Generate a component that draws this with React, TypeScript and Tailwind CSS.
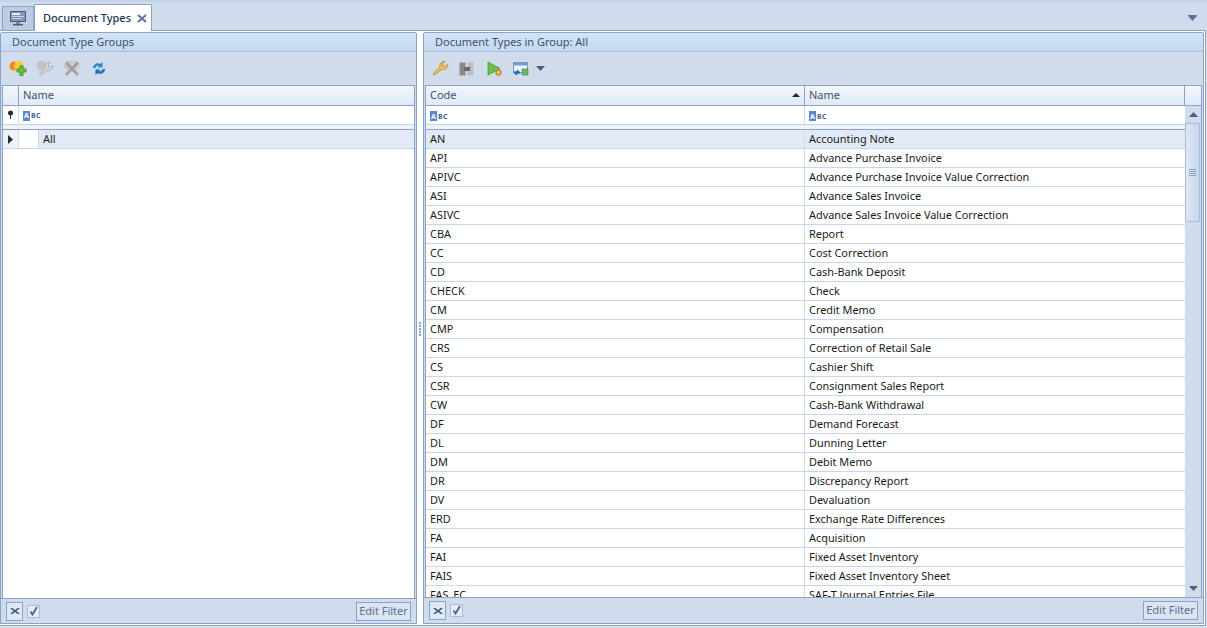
import React from "react";

const rows: [string, string][] = [
  ["AN", "Accounting Note"],
  ["API", "Advance Purchase Invoice"],
  ["APIVC", "Advance Purchase Invoice Value Correction"],
  ["ASI", "Advance Sales Invoice"],
  ["ASIVC", "Advance Sales Invoice Value Correction"],
  ["CBA", "Report"],
  ["CC", "Cost Correction"],
  ["CD", "Cash-Bank Deposit"],
  ["CHECK", "Check"],
  ["CM", "Credit Memo"],
  ["CMP", "Compensation"],
  ["CRS", "Correction of Retail Sale"],
  ["CS", "Cashier Shift"],
  ["CSR", "Consignment Sales Report"],
  ["CW", "Cash-Bank Withdrawal"],
  ["DF", "Demand Forecast"],
  ["DL", "Dunning Letter"],
  ["DM", "Debit Memo"],
  ["DR", "Discrepancy Report"],
  ["DV", "Devaluation"],
  ["ERD", "Exchange Rate Differences"],
  ["FA", "Acquisition"],
  ["FAI", "Fixed Asset Inventory"],
  ["FAIS", "Fixed Asset Inventory Sheet"],
  ["FAS_EC", "SAF-T Journal Entries File"],
];

function Abc() {
  return (
    <span className="flex items-center gap-[1px]">
      <span className="flex h-[10px] w-[7px] items-center justify-center bg-[#5b87d0] text-[7px] font-bold leading-none text-white">A</span>
      <span className="text-[7px] font-bold leading-none tracking-[0.3px] text-[#3f5f90]">BC</span>
    </span>
  );
}

function Footer({ tall, pad }: { tall?: boolean; pad: string }) {
  return (
    <div className={`flex shrink-0 items-center border-t border-[#8aa3c6] bg-[#d0dcec] pr-[5px] ${pad} ${tall ? "h-[26px]" : "h-[25px]"}`}>
      <div className="flex h-[19px] w-[17px] items-center justify-center border border-[#8aa3c6] bg-[#dfe9f6]">
        <svg width="10" height="6" viewBox="0 0 10 6"><path d="M0 0h2.500L5 2l2.500-2H10L6.500 3 10 6H7.500L5 4 2.500 6H0l3.500-3z" fill="#4d5f7d" /></svg>
      </div>
      <div className="ml-[4px] flex h-[13px] w-[13px] items-center justify-center border border-[#a9bdd8] bg-[#e6ebf3]">
        <svg width="11" height="11" viewBox="0 0 11 11"><path d="M2.500 5.500l2 3L9 1" fill="none" stroke="#4d6690" strokeWidth="1.800" /></svg>
      </div>
      <div className="ml-auto flex h-[19px] w-[55px] items-center justify-center border border-[#8aa3c6] bg-[#dae5f3] text-[11px] text-[#5f6f8c]">Edit Filter</div>
    </div>
  );
}

function Panel({ title, toolbar, children, className, tall, pad }: { title: string; toolbar: React.ReactNode; children: React.ReactNode; className: string; tall?: boolean; pad: string }) {
  return (
    <section className={`flex h-[592px] shrink-0 flex-col rounded-t-[2px] border border-[#8aa3c6] bg-[#d0dcec] ${className}`}>
      <div className="flex h-[19px] shrink-0 items-center border-b border-[#a9bdd8] bg-gradient-to-b from-[#d3e4f9] to-[#c5d8f1] pl-[11px] text-[11px] text-[#3f4f6e]">{title}</div>
      <div className="flex h-[33px] shrink-0 items-center">{toolbar}</div>
      {children}
      <Footer tall={tall} pad={pad} />
    </section>
  );
}

const hdr = "flex h-[21px] shrink-0 items-center border-t border-b border-[#8aa3c6] bg-gradient-to-b from-[#f3f7fd] to-[#dfe9f7] text-[11px] text-[#3f4f6e]";
const sep = "h-[6px] shrink-0 border-t border-b border-t-[#c3d8f0] border-b-[#8aa3c6] bg-[#eef3fa]";
const font = { fontFamily: '"Noto Sans", "Open Sans", sans-serif' };

export default function App() {
  return (
    <div style={font} className="flex h-[628px] w-[1207px] flex-col overflow-hidden bg-[#d6e0ee]">
      <div className="relative flex h-[30px] shrink-0 items-end border-t-2 border-[#c3d2e6] bg-[#d0dcec] pl-[2px]">
        <div className="flex h-[24px] w-[32px] items-center justify-center border border-b-0 border-[#8aa3c6] bg-[#bccde3]">
          <svg width="16" height="15" viewBox="0 0 16 15">
            <rect x="0.500" y="0.500" width="15" height="10" fill="#8394b0" stroke="#4d5f7d" />
            <rect x="2" y="2" width="8" height="2" fill="#e4ecf7" />
            <rect x="2" y="5" width="12" height="1" fill="#c3d2e6" />
            <rect x="2" y="7" width="10" height="1" fill="#c3d2e6" />
            <rect x="6" y="11" width="4" height="2" fill="#7c8ba5" />
            <rect x="3" y="13" width="10" height="1.500" fill="#4d5f7d" />
          </svg>
        </div>
        <div className="-mb-[1px] flex h-[27px] w-[118px] items-center whitespace-nowrap border border-b-0 border-[#8aa3c6] bg-white pl-[8px] text-[11px] font-medium text-[#26344f]">
          Document Types
          <svg className="ml-[6px]" width="10" height="9" viewBox="0 0 10 9"><path d="M1 1l8 7M9 1L1 8" stroke="#5f7393" strokeWidth="2" /></svg>
        </div>
        <svg className="absolute right-[10px] top-[13px]" width="9" height="6" viewBox="0 0 9 6"><path d="M0 0h9v1L4.500 6 0 1z" fill="#5f7393" /></svg>
      </div>
      <div className="flex h-[596px] w-[1206px] shrink-0 border-t border-r border-b border-[#8aa3c6] bg-white pt-[1px] pr-[1px]">
        <Panel
          title="Document Type Groups"
          className="w-[417px]"
          pad="pl-[5px]"
          toolbar={
            <div className="flex items-center pl-[8px]">
              <svg width="18" height="17" viewBox="0 0 18 17">
                <circle cx="5" cy="6" r="4.500" fill="#f08a1d" />
                <circle cx="10" cy="6" r="5" fill="#fbc93d" />
                <path d="M8 9h3V6h3v3h3v3h-3v3.500h-3V12H8z" fill="#6cc04a" stroke="#2f8a2a" strokeWidth="0.800" />
              </svg>
              <svg className="ml-[9px]" width="18" height="17" viewBox="0 0 18 17">
                <circle cx="5.500" cy="5.500" r="5" fill="#c4c4c4" />
                <path d="M4 15.500l-1-1 6.500-7c-.6-2.500 1-5 4-5.300l.9.500-2.200 2.300.5 2 2 .5 1.800-2 .5.700c-.3 3-2.800 4.700-5.300 4z" fill="#d6d6d6" stroke="#a8a8a8" strokeWidth="0.800" />
              </svg>
              <svg className="ml-[9px]" width="19" height="17" viewBox="0 0 19 17">
                <circle cx="6" cy="5.500" r="5" fill="#c4c4c4" />
                <circle cx="12" cy="5.500" r="5" fill="#cdcdcd" />
                <path d="M3 2.500l12 12.500M15 2.500L3 15" stroke="#a0a0a0" strokeWidth="2.600" />
              </svg>
              <svg className="ml-[10px]" width="14" height="15" viewBox="0 0 14 15">
                <path d="M1 7C1 3.500 5 1 8.500 2.800L10.500 1v5.500H5.500l1.500-1.500C5 4.300 3.500 5.500 3.500 7z" fill="#2f86c9" />
                <path d="M13 8c0 3.500-4 6-7.500 4.200L3.500 14V8.500h5L7 10c2 .7 3.500-.500 3.500-2z" fill="#1f6fb5" />
              </svg>
            </div>
          }
        >
          <div className="mx-[1px] flex min-h-0 flex-1 flex-col border-x border-[#8aa3c6] bg-white">
            <div className={hdr}>
              <div className="h-full w-[16px] border-r border-[#8aa3c6]" />
              <div className="pl-[4px]">Name</div>
            </div>
            <div className="flex h-[18px] shrink-0 items-center">
              <div className="flex h-full w-[16px] items-center justify-center border-r border-[#d0dcec]">
                <svg width="7" height="10" viewBox="0 0 7 10"><circle cx="3.500" cy="3" r="2.500" fill="#1f2a3c" /><rect x="3" y="4" width="1" height="5" fill="#1f2a3c" /></svg>
              </div>
              <div className="pl-[4px] pt-[1px]"><Abc /></div>
            </div>
            <div className={sep} />
            <div className="flex h-[19px] shrink-0 items-center border-b border-[#c3d8f0] text-[11px] text-[#1a1a1a]">
              <div className="flex h-full w-[16px] items-center justify-center border-r border-[#d0dcec] bg-[#eef3fa]">
                <svg width="5" height="9" viewBox="0 0 5 9"><path d="M0 0l5 4.500L0 9z" fill="#1f2a3c" /></svg>
              </div>
              <div className="h-full w-[19px]" />
              <div className="flex h-full flex-1 items-center border-l border-[#c3d8f0] bg-[#e1eaf5] pl-[4px]">All</div>
            </div>
          </div>
        </Panel>
        <div className="flex w-[6px] shrink-0 flex-col items-center justify-center gap-[1px]">
          {[0, 1, 2, 3, 4].map((i) => <span key={i} className="h-[2px] w-[2px] bg-[#8aa3c6]" />)}
        </div>
        <Panel
          title="Document Types in Group: All"
          className="w-[781px]"
          tall
          pad="pl-[5px]"
          toolbar={
            <div className="flex items-center pl-[8px]">
              <svg width="17" height="17" viewBox="0 0 17 17">
                <path d="M2 15l-1-1 7-7.500c-.6-2.500 1-5 4-5.300l.9.500-2.200 2.300.5 2 2 .5 2.200-2.200.5.900c-.3 3-2.800 4.700-5.300 4z" fill="#f2c063" stroke="#b8802c" strokeWidth="0.800" />
              </svg>
              <svg className="ml-[10px]" width="15" height="14" viewBox="0 0 15 14">
                <rect x="0.500" y="0.500" width="6" height="13" fill="#8a8a8a" />
                <rect x="8.500" y="0.500" width="6" height="13" fill="#bdbdbd" />
                <rect x="5" y="5" width="6" height="4" fill="#6a6a6a" />
              </svg>
              <svg className="ml-[13px]" width="15" height="15" viewBox="0 0 15 15">
                <path d="M1 1l12 6.500L1 14z" fill="#6cc04a" stroke="#3f9a2f" strokeWidth="0.800" />
                <circle cx="11.500" cy="11.500" r="2.500" fill="#f2c063" stroke="#b8802c" strokeWidth="1.200" />
              </svg>
              <svg className="ml-[11px]" width="16" height="15" viewBox="0 0 16 15">
                <rect x="0.500" y="1.500" width="14" height="10" fill="#eef3fa" stroke="#7f98bd" />
                <rect x="1" y="2" width="13" height="2.500" fill="#6f9fd8" />
                <path d="M1 11h5l-2-2M7 12H2l2 2" fill="none" stroke="#1f6fb5" strokeWidth="1.300" />
                <rect x="9" y="8" width="6" height="6" fill="#6cb66c" stroke="#2f7a2f" strokeWidth="0.500" />
              </svg>
              <svg className="ml-[7px]" width="9" height="5" viewBox="0 0 9 5"><path d="M0 0h9L4.500 5z" fill="#4d5f7d" /></svg>
            </div>
          }
        >
          <div className="mx-[1px] flex min-h-0 flex-1 border-x border-[#8aa3c6] bg-white">
            <div className="flex min-w-0 flex-1 flex-col overflow-hidden">
              <div className={hdr}>
                <div className="relative flex h-full w-[379px] items-center border-r border-[#8aa3c6] pl-[4px]">
                  Code
                  <svg className="absolute right-[4px] top-[7px]" width="8" height="4" viewBox="0 0 8 4"><path d="M4 0l4 4H0z" fill="#1f2a3c" /></svg>
                </div>
                <div className="flex h-full flex-1 items-center border-r border-[#8aa3c6] pl-[4px]">Name</div>
              </div>
              <div className="flex h-[18px] shrink-0 items-center">
                <div className="h-full w-[379px] border-r border-[#d0dcec] pl-[4px] pt-[5px]"><Abc /></div>
                <div className="h-full flex-1 pl-[4px] pt-[5px]"><Abc /></div>
              </div>
              <div className={sep} />
              <div className="min-h-0 flex-1 overflow-hidden">
                {rows.map(([c, n], i) => (
                  <div key={c} className={`flex h-[19px] items-center border-b border-[#c3d8f0] text-[10.9px] text-[#1a1a1a] ${i === 0 ? "bg-[#e1eaf5]" : ""}`}>
                    <div className="flex h-full w-[379px] shrink-0 items-center border-r border-[#d0dcec] pl-[4px]">{c}</div>
                    <div className="pl-[4px]">{n}</div>
                  </div>
                ))}
              </div>
            </div>
            <div className="flex w-[16px] shrink-0 flex-col border-t border-[#8aa3c6]">
              <div className="h-[20px] shrink-0 border-b border-[#8aa3c6] bg-gradient-to-b from-[#f3f7fd] to-[#dfe9f7]" />
              <div className="flex min-h-0 flex-1 flex-col bg-[#d0dcec]">
                <div className="flex h-[17px] shrink-0 items-center justify-center">
                  <svg width="9" height="5" viewBox="0 0 9 5"><path d="M4.500 0L9 5H0z" fill="#4d5f7d" /></svg>
                </div>
                <div className="flex h-[99px] w-[15px] shrink-0 flex-col items-center justify-center gap-[1px] rounded-[1px] border border-[#a9bdd8] bg-gradient-to-r from-[#dfe9f6] to-[#c7d6ea]">
                  {[0, 1, 2, 3].map((i) => <span key={i} className="h-[1px] w-[7px] bg-[#8aa3c6]" />)}
                </div>
                <div className="mt-auto flex h-[18px] shrink-0 items-center justify-center">
                  <svg width="9" height="5" viewBox="0 0 9 5"><path d="M0 0h9L4.500 5z" fill="#4d5f7d" /></svg>
                </div>
              </div>
            </div>
          </div>
        </Panel>
      </div>
    </div>
  );
}
